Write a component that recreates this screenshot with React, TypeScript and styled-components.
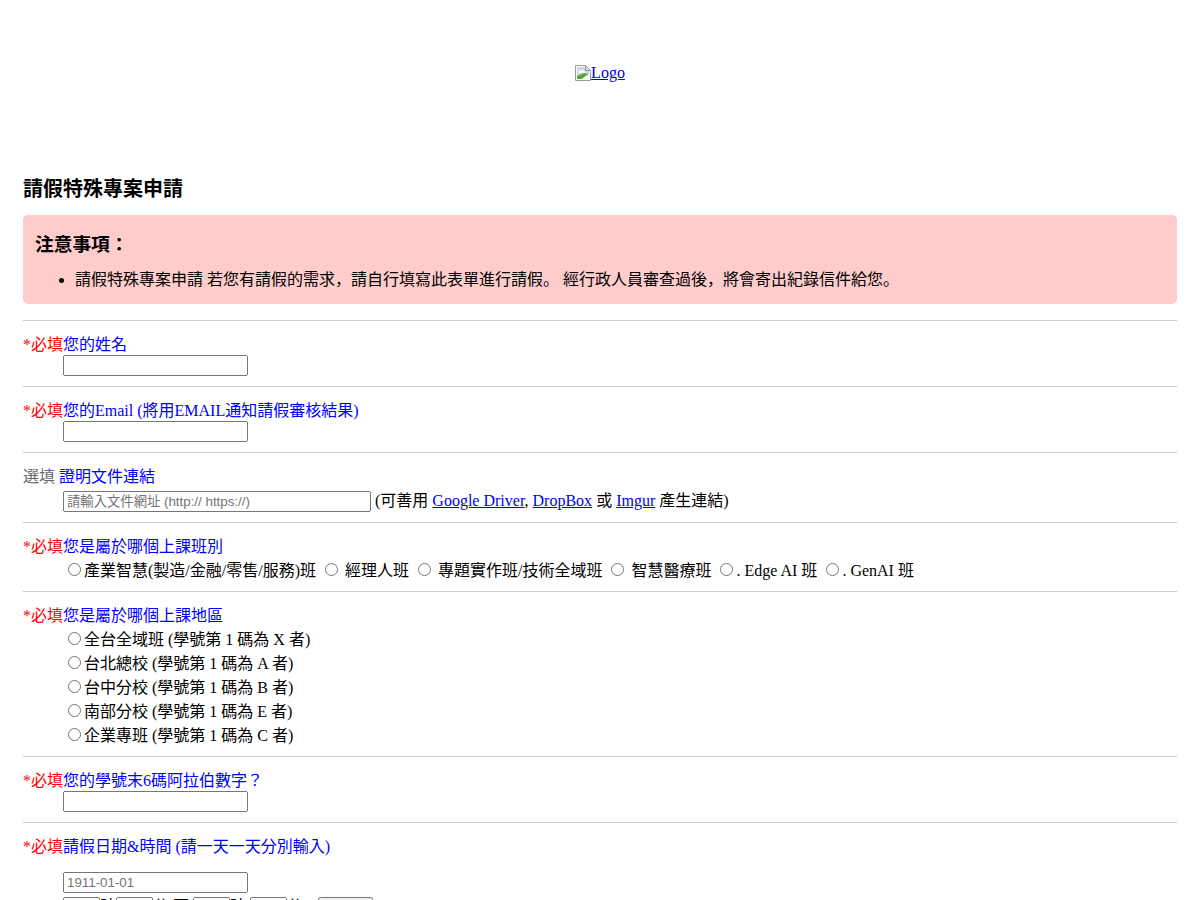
import React from "react";
import styled, { createGlobalStyle } from "styled-components";

const Global = createGlobalStyle`
  html, body { margin: 0; padding: 0; background: #fff; }
  body { font-family: "Liberation Serif", "Noto Sans CJK JP", serif; font-size: 16px; color: #000; }
  input, button { font-family: "Liberation Sans", "Noto Sans CJK JP", sans-serif; font-size: 13.333px; }
`;

const Page = styled.div`
  padding: 0 23px;
`;

const LogoBar = styled.div`
  height: 145px;
  display: flex;
  align-items: center;
  justify-content: center;
`;

const LogoLink = styled.a`
  color: #00e;
  text-decoration: underline;
  display: inline-flex;
  align-items: flex-start;
  line-height: 16px;
  svg { display: block; }
`;

const Title = styled.h3`
  margin: 0;
  padding-top: 30px;
  font-size: 20px;
  line-height: 28px;
  font-weight: 700;
`;

const Notice = styled.div`
  margin-top: 12px;
  background: #ffcccc;
  border-radius: 5px;
  padding: 13px 12px 12px;
  height: 89px;
  box-sizing: border-box;
`;

const NoticeTitle = styled.h4`
  margin: 0;
  font-size: 18.72px;
  line-height: 34px;
  font-weight: 700;
`;

const NoticeList = styled.ul`
  margin: 6px 0 0;
  padding-left: 40px;
  line-height: 24px;
`;

const Rule = styled.hr`
  margin: 16px 0 0;
  border: none;
  border-top: 1px solid #ccc;
  height: 0;
`;

const Divider = styled(Rule)`
  margin-top: 10px;
`;

const Field = styled.dl`
  margin: 0;
  padding: 10px 0 0;
`;

const Head = styled.dt`
  color: #00f;
`;

const Required = styled.span`
  color: #f00;
`;

const Optional = styled.span`
  color: #666;
  margin-right: 4px;
`;

const Body = styled.dd`
  margin: 0 0 0 40px;
`;

const TextBox = styled.input<{ $w?: number }>`
  width: ${(p) => p.$w ?? 185}px;
  height: 21px;
  box-sizing: border-box;
  &::placeholder { color: #757575; }
`;

const Radio = styled.input.attrs({ type: "radio" })`
  margin: 3px 3px 0 5px;
`;

const DateLine = styled.div`
  margin-top: 15px;
`;

const Small = styled.input`
  width: 37px;
  height: 21px;
  box-sizing: border-box;
`;

const AddButton = styled.button`
  width: 55px;
  height: 21px;
  margin-left: 11px;
  padding: 1px 6px;
  vertical-align: -3px;
`;

const BrokenImage = () => (
  <svg width="16" height="16" viewBox="0 0 16 16" aria-hidden="true">
    <path d="M.5.5h10l5 5v10H.5z" fill="#fff" stroke="#9a9a9a" />
    <path d="M10.5.5v5h5z" fill="#dcdcdc" stroke="#9a9a9a" />
    <path d="M2 2h8v4h4v5H2z" fill="#c4d6f4" />
    <path d="M3 7c1-2 4-3 6-1l2 2H3z" fill="#fff" />
    <path d="M2 14v-3l7-3 4 1-6 5z" fill="#56a82e" />
    <path d="M8 15l7-6v6z" fill="#fff" />
  </svg>
);

const classes = ["產業智慧(製造/金融/零售/服務)班", " 經理人班", " 專題實作班/技術全域班", " 智慧醫療班", ". Edge AI 班", ". GenAI 班"];
const campuses = ["全台全域班 (學號第 1 碼為 X 者)", "台北總校 (學號第 1 碼為 A 者)", "台中分校 (學號第 1 碼為 B 者)", "南部分校 (學號第 1 碼為 E 者)", "企業專班 (學號第 1 碼為 C 者)"];

export default function App() {
  return (
    <Page>
      <Global />
      <LogoBar>
        <LogoLink href="#"><BrokenImage />Logo</LogoLink>
      </LogoBar>
      <Title>請假特殊專案申請</Title>
      <Notice>
        <NoticeTitle>注意事項：</NoticeTitle>
        <NoticeList>
          <li>請假特殊專案申請 若您有請假的需求，請自行填寫此表單進行請假。 經行政人員審查過後，將會寄出紀錄信件給您。</li>
        </NoticeList>
      </Notice>
      <Rule />
      <Field>
        <Head><Required>*必填</Required>您的姓名</Head>
        <Body><TextBox type="text" /></Body>
      </Field>
      <Divider />
      <Field>
        <Head><Required>*必填</Required>您的Email (將用EMAIL通知請假審核結果)</Head>
        <Body><TextBox type="text" /></Body>
      </Field>
      <Divider />
      <Field>
        <Head><Optional>選填</Optional>證明文件連結</Head>
        <Body>
          <TextBox type="text" $w={308} placeholder="請輸入文件網址 (http:// https://)" /> (可善用 <a href="#">Google Driver</a>, <a href="#">DropBox</a> 或 <a href="#">Imgur</a> 產生連結)
        </Body>
      </Field>
      <Divider />
      <Field>
        <Head><Required>*必填</Required>您是屬於哪個上課班別</Head>
        <Body>
          {classes.map((c) => (
            <React.Fragment key={c}><Radio name="cls" />{c} </React.Fragment>
          ))}
        </Body>
      </Field>
      <Divider />
      <Field>
        <Head><Required>*必填</Required>您是屬於哪個上課地區</Head>
        <Body>
          {campuses.map((c) => (
            <div key={c}><Radio name="campus" />{c}</div>
          ))}
        </Body>
      </Field>
      <Divider />
      <Field>
        <Head><Required>*必填</Required>您的學號末6碼阿拉伯數字？</Head>
        <Body><TextBox type="text" /></Body>
      </Field>
      <Divider />
      <Field>
        <Head><Required>*必填</Required>請假日期&amp;時間 (請一天一天分別輸入)</Head>
        <Body>
          <DateLine><TextBox type="text" placeholder="1911-01-01" /></DateLine>
          <div>
            <Small />時<Small />分 至 <Small />時 <Small />分 <AddButton type="button">新增</AddButton>
          </div>
        </Body>
      </Field>
    </Page>
  );
}
